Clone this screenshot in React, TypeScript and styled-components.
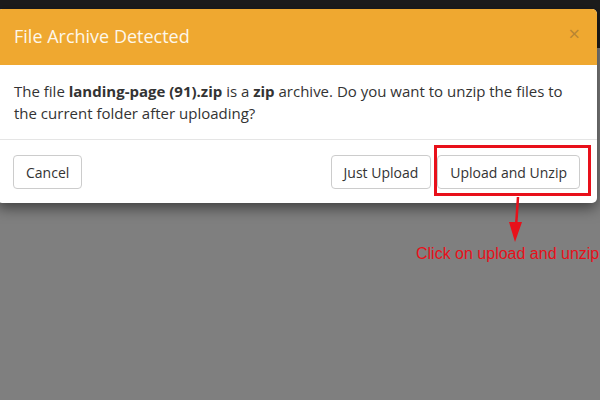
import { FC } from "react";
import styled, { createGlobalStyle } from "styled-components";

const GlobalStyle = createGlobalStyle`
  body {
    margin: 0;
    font-family: "Open Sans", "Liberation Sans", sans-serif;
  }
`;

const PageStyled = styled.div`
  position: relative;
  width: 600px;
  height: 400px;
  overflow: hidden;
  background: linear-gradient(#1c1c1c 0, #1c1c1c 48px, #7f7f7f 48px);
  padding-top: 9px;
  box-sizing: border-box;
`;

const DialogStyled = styled.div`
  width: 600px;
  margin-left: -3px;
  background: #fff;
  border-radius: 5px;
  overflow: hidden;
  box-shadow: 0 5px 14px rgba(0, 0, 0, 0.5);
`;

const HeaderStyled = styled.div`
  display: flex;
  align-items: center;
  justify-content: space-between;
  height: 56px;
  padding: 0 17px 0 17px;
  background: #efa830;
`;

const TitleStyled = styled.h4`
  margin: 0 0 2px;
  font-size: 18px;
  font-weight: 400;
  color: #fdf7ea;
`;

const CloseStyled = styled.span`
  font-size: 20px;
  line-height: 1;
  color: #b88533;
  margin-top: -6px;
`;

const BodyStyled = styled.div`
  padding: 15px 22px 15px 17px;
  font-size: 15px;
  line-height: 22px;
  color: #333;
  border-bottom: 1px solid #e5e5e5;
`;

const FooterStyled = styled.div`
  display: flex;
  align-items: center;
  gap: 6px;
  padding: 15px 17px 14px 16px;
`;

const ButtonStyled = styled.button<{ $push?: boolean }>`
  height: 34px;
  padding: 0 12px;
  margin-left: ${({ $push }) => ($push ? "auto" : "0")};
  font-family: "Open Sans", "Liberation Sans", sans-serif;
  font-size: 14px;
  color: #333;
  background: #fff;
  border: 1px solid #ccc;
  border-radius: 4px;
`;

const HighlightStyled = styled.div`
  position: absolute;
  left: 434px;
  top: 145px;
  width: 151px;
  height: 45px;
  border: 3px solid #e8101a;
`;

const ArrowStyled = styled.svg`
  position: absolute;
  left: 500px;
  top: 195px;
`;

const NoteStyled = styled.div`
  position: absolute;
  left: 416px;
  top: 245px;
  font-family: "Liberation Sans", Arial, sans-serif;
  font-size: 16px;
  color: #e8101a;
  white-space: nowrap;
`;

const App: FC = () => {
  return (
    <PageStyled>
      <GlobalStyle />
      <DialogStyled>
        <HeaderStyled>
          <TitleStyled>File Archive Detected</TitleStyled>
          <CloseStyled>×</CloseStyled>
        </HeaderStyled>
        <BodyStyled>
          The file <b>landing-page (91).zip</b> is a <b>zip</b> archive. Do you
          want to unzip the files to the current folder after uploading?
        </BodyStyled>
        <FooterStyled>
          <ButtonStyled>Cancel</ButtonStyled>
          <ButtonStyled $push>Just Upload</ButtonStyled>
          <ButtonStyled>Upload and Unzip</ButtonStyled>
        </FooterStyled>
      </DialogStyled>
      <HighlightStyled />
      <ArrowStyled width="30" height="50" viewBox="0 0 30 50">
        <line x1="18" y1="2" x2="16" y2="32" stroke="#e8101a" strokeWidth="2.5" />
        <polygon points="9,27 22,27 15,47" fill="#e8101a" />
      </ArrowStyled>
      <NoteStyled>Click on upload and unzip</NoteStyled>
    </PageStyled>
  );
};

export default App;
